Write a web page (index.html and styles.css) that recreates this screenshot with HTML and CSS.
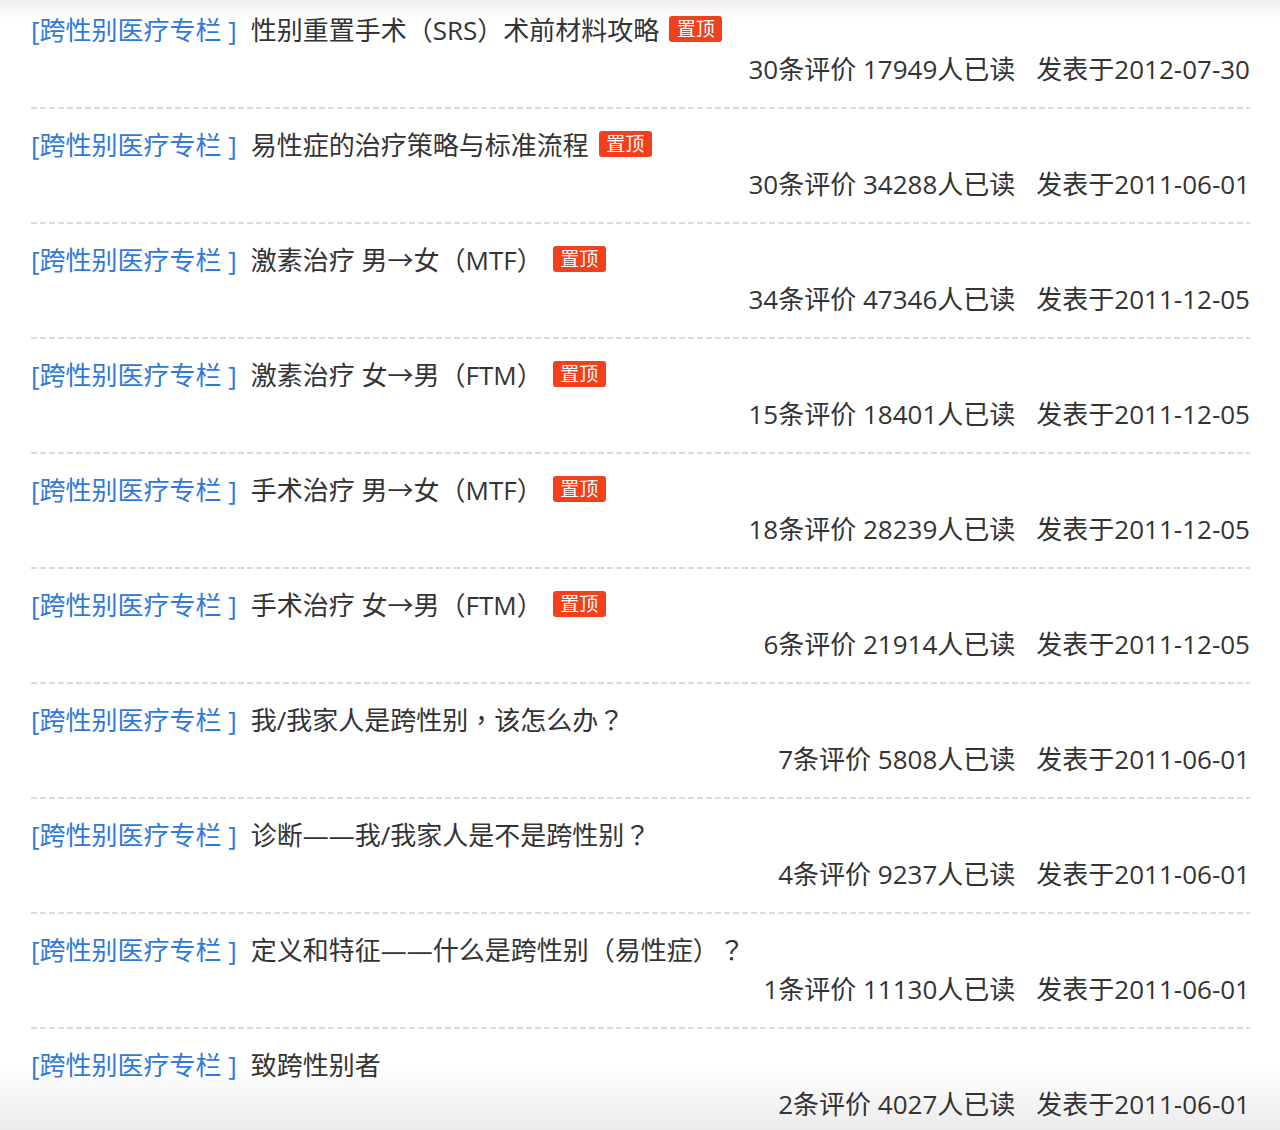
FILE: index.html
```html
<!DOCTYPE html>
<html lang="zh-CN">
<head>
<meta charset="utf-8">
<title>跨性别医疗专栏</title>
<link rel="stylesheet" href="styles.css">
</head>
<body>
<ul class="list">
  <li class="item">
    <div class="title-line"><a class="cat" href="#">[跨性别医疗专栏 ]</a><span class="title" lang="zh-TW">性别重置手术（SRS）术前材料攻略</span><span class="badge">置顶</span></div>
    <div class="meta"><span>30条评价 17949人已读</span><span>发表于2012-07-30</span></div>
  </li>
  <li class="item">
    <div class="title-line"><a class="cat" href="#">[跨性别医疗专栏 ]</a><span class="title" lang="zh-TW">易性症的治疗策略与标准流程</span><span class="badge">置顶</span></div>
    <div class="meta"><span>30条评价 34288人已读</span><span>发表于2011-06-01</span></div>
  </li>
  <li class="item">
    <div class="title-line"><a class="cat" href="#">[跨性别医疗专栏 ]</a><span class="title" lang="zh-TW">激素治疗 男→女（MTF）</span><span class="badge">置顶</span></div>
    <div class="meta"><span>34条评价 47346人已读</span><span>发表于2011-12-05</span></div>
  </li>
  <li class="item">
    <div class="title-line"><a class="cat" href="#">[跨性别医疗专栏 ]</a><span class="title" lang="zh-TW">激素治疗 女→男（FTM）</span><span class="badge">置顶</span></div>
    <div class="meta"><span>15条评价 18401人已读</span><span>发表于2011-12-05</span></div>
  </li>
  <li class="item">
    <div class="title-line"><a class="cat" href="#">[跨性别医疗专栏 ]</a><span class="title" lang="zh-TW">手术治疗 男→女（MTF）</span><span class="badge">置顶</span></div>
    <div class="meta"><span>18条评价 28239人已读</span><span>发表于2011-12-05</span></div>
  </li>
  <li class="item">
    <div class="title-line"><a class="cat" href="#">[跨性别医疗专栏 ]</a><span class="title" lang="zh-TW">手术治疗 女→男（FTM）</span><span class="badge">置顶</span></div>
    <div class="meta"><span>6条评价 21914人已读</span><span>发表于2011-12-05</span></div>
  </li>
  <li class="item">
    <div class="title-line"><a class="cat" href="#">[跨性别医疗专栏 ]</a><span class="title" lang="zh-TW">我/我家人是跨性别，该怎么办？</span></div>
    <div class="meta"><span>7条评价 5808人已读</span><span>发表于2011-06-01</span></div>
  </li>
  <li class="item">
    <div class="title-line"><a class="cat" href="#">[跨性别医疗专栏 ]</a><span class="title" lang="zh-TW">诊断——我/我家人是不是跨性别？</span></div>
    <div class="meta"><span>4条评价 9237人已读</span><span>发表于2011-06-01</span></div>
  </li>
  <li class="item">
    <div class="title-line"><a class="cat" href="#">[跨性别医疗专栏 ]</a><span class="title" lang="zh-TW">定义和特征——什么是跨性别（易性症）？</span></div>
    <div class="meta"><span>1条评价 11130人已读</span><span>发表于2011-06-01</span></div>
  </li>
  <li class="item">
    <div class="title-line"><a class="cat" href="#">[跨性别医疗专栏 ]</a><span class="title" lang="zh-TW">致跨性别者</span></div>
    <div class="meta"><span>2条评价 4027人已读</span><span>发表于2011-06-01</span></div>
  </li>
</ul>
</body>
</html>
```
FILE: styles.css
```css
html, body {
  margin: 0;
  padding: 0;
}
body {
  min-height: 1130px;
  background: linear-gradient(to bottom, #eeeeee 0, #ffffff 18px, #ffffff 1068px, #ebebeb 1130px);
  font-family: "Open Sans", "Noto Sans CJK SC", sans-serif;
  font-size: 26px;
  color: #333333;
}
.list {
  list-style: none;
  margin: 0;
  padding: 0 30px 0 31px;
}
.item {
  padding: 15px 0 21px;
  background: repeating-linear-gradient(to right, #dcdcdc 0, #dcdcdc 6px, transparent 6px, transparent 9px) left bottom / 100% 2px no-repeat;
}
.item:first-child {
  padding-top: 9px;
}
.item:last-child {
  background: none;
}
.title-line {
  display: flex;
  align-items: center;
  height: 39px;
  white-space: nowrap;
}
.title {
  font-family: "Open Sans", "Noto Sans CJK TC", sans-serif;
}
.cat {
  color: #2f79d9;
  text-decoration: none;
  margin-right: 14px;
}
.badge {
  margin-left: 10px;
  width: 53px;
  height: 26px;
  border-radius: 3px;
  background: #f2401c;
  color: #ffffff;
  font-size: 19px;
  line-height: 26px;
  text-align: center;
}
.meta {
  display: flex;
  justify-content: flex-end;
  align-items: center;
  gap: 21px;
  height: 40px;
  white-space: nowrap;
}
```
